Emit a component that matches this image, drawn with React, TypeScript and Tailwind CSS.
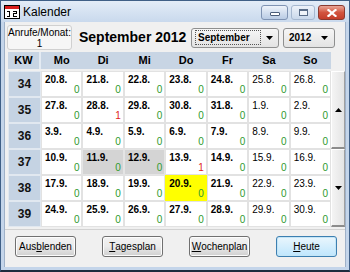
import React from "react";

type Cell = { d: string; n: number; bg?: string };

const rows: { kw: number; days: Cell[] }[] = [
  { kw: 34, days: [{ d: "20.8.", n: 0 }, { d: "21.8.", n: 0 }, { d: "22.8.", n: 0 }, { d: "23.8.", n: 0 }, { d: "24.8.", n: 0 }, { d: "25.8.", n: 0 }, { d: "26.8.", n: 0 }] },
  { kw: 35, days: [{ d: "27.8.", n: 0 }, { d: "28.8.", n: 1 }, { d: "29.8.", n: 0 }, { d: "30.8.", n: 0 }, { d: "31.8.", n: 0 }, { d: "1.9.", n: 0 }, { d: "2.9.", n: 0 }] },
  { kw: 36, days: [{ d: "3.9.", n: 0 }, { d: "4.9.", n: 0 }, { d: "5.9.", n: 0 }, { d: "6.9.", n: 0 }, { d: "7.9.", n: 0 }, { d: "8.9.", n: 0 }, { d: "9.9.", n: 0 }] },
  { kw: 37, days: [{ d: "10.9.", n: 0 }, { d: "11.9.", n: 0, bg: "grey" }, { d: "12.9.", n: 0, bg: "grey" }, { d: "13.9.", n: 1 }, { d: "14.9.", n: 0 }, { d: "15.9.", n: 0 }, { d: "16.9.", n: 0 }] },
  { kw: 38, days: [{ d: "17.9.", n: 0 }, { d: "18.9.", n: 0 }, { d: "19.9.", n: 0 }, { d: "20.9.", n: 0, bg: "yellow" }, { d: "21.9.", n: 0 }, { d: "22.9.", n: 0 }, { d: "23.9.", n: 0 }] },
  { kw: 39, days: [{ d: "24.9.", n: 0 }, { d: "25.9.", n: 0 }, { d: "26.9.", n: 0 }, { d: "27.9.", n: 0 }, { d: "28.9.", n: 0 }, { d: "29.9.", n: 0 }, { d: "30.9.", n: 0 }] },
];

const dayNames = ["Mo", "Di", "Mi", "Do", "Fr", "Sa", "So"];

const Arrow = ({ up }: { up?: boolean }) => (
  <svg width="7" height="4" viewBox="0 0 7 4">
    {up ? <polygon points="0,4 7,4 3.5,0" fill="#000" /> : <polygon points="0,0 7,0 3.5,4" fill="#000" />}
  </svg>
);

const Btn = ({ children, def }: { children: React.ReactNode; def?: boolean }) => (
  <div
    className={`w-[61px] h-[21px] rounded-[3px] border flex items-center justify-center text-[10px] text-black whitespace-nowrap ${
      def
        ? "border-[#3c7fb1] bg-gradient-to-b from-[#eaf6fd] to-[#bee6fd] shadow-[inset_0_0_0_1px_#c4e5f6]"
        : "border-[#707070] bg-gradient-to-b from-[#f2f2f2] via-[#ebebeb] to-[#cfcfcf] shadow-[inset_0_0_0_1px_#fcfcfc]"
    }`}
  >
    {children}
  </div>
);

export default function App() {
  return (
    <div className="w-[350px] h-[272px] flex flex-col bg-[#c4d5ea] border border-[#3f5f86] border-b-2 border-b-[#1e2c3e] font-['Liberation_Sans',Arial,sans-serif] overflow-hidden">
      {/* TITLE BAR */}
      <div className="h-[21px] flex items-center bg-gradient-to-b from-[#e3ecf7] to-[#c9d9ed] relative">
        <svg width="16" height="14" viewBox="0 0 16 14" className="ml-[3px]">
          <rect x="0.5" y="0.5" width="15" height="13" fill="#fff" stroke="#000" />
          <rect x="1" y="1" width="14" height="3" fill="#d81e1e" />
          <rect x="3" y="6" width="3" height="1" fill="#000" />
          <rect x="5" y="6" width="1" height="6" fill="#000" />
          <rect x="3" y="11" width="3" height="1" fill="#000" />
          <rect x="9" y="6" width="4" height="1" fill="#000" />
          <rect x="12" y="6" width="1" height="3" fill="#000" />
          <rect x="9" y="8" width="4" height="1" fill="#000" />
          <rect x="9" y="8" width="1" height="4" fill="#000" />
          <rect x="9" y="11" width="4" height="1" fill="#000" />
        </svg>
        <span className="ml-[3px] text-[12px] text-black">Kalender</span>
        <div className="ml-auto mr-[4px] flex items-start gap-[3px] self-start mt-[4px]">
          <div className="w-[27px] h-[15px] rounded-[3px] border border-[#7f93b3] bg-gradient-to-b from-[#eef3fa] to-[#b9cbe4] flex items-end justify-center pb-[3px]">
            <div className="w-[10px] h-[4px] bg-white border border-[#4a5d7a] rounded-[1px]" />
          </div>
          <div className="w-[24px] h-[15px] rounded-[3px] border border-[#a6b8d0] bg-gradient-to-b from-[#edf2f9] to-[#c9d8eb] flex items-center justify-center">
            <div className="w-[9px] h-[7px] border border-[#5a6d88] border-t-2 bg-white/60" />
          </div>
          <div className="w-[27px] h-[15px] rounded-[3px] border border-[#8a3a30] bg-gradient-to-b from-[#e9a597] via-[#d2543f] to-[#c43d2a] flex items-center justify-center">
            <svg width="10" height="8" viewBox="0 0 10 8">
              <path d="M1.5 1 L8.5 7 M8.5 1 L1.5 7" stroke="#fff" strokeWidth="2.2" strokeLinecap="square" />
            </svg>
          </div>
        </div>
      </div>

      {/* CLIENT */}
      <div className="flex-1 mx-[3px] mb-[3px] bg-[#f0f0f0] border-l border-r border-[#9fb1c8] flex flex-col">
        {/* TOP ROW */}
        <div className="flex items-center mt-[3px] h-[25px]">
          <div className="ml-[2px] w-[65px] h-[25px] rounded-[3px] border border-[#d0d0d0] bg-[#f6f6f6] flex flex-col items-center justify-center text-[10px] leading-[11px] text-black whitespace-nowrap">
            <span>Anrufe/Monat:</span>
            <span>1</span>
          </div>
          <div className="ml-[7px] w-[112px] text-[14px] font-bold text-black whitespace-nowrap">September 2012</div>
          <div className="w-[88px] h-[20px] rounded-[3px] border border-[#8e8f8f] bg-gradient-to-b from-[#f6f6f6] to-[#e3e3e3] flex items-center px-[3px]">
            <div className="w-[66px] h-[15px] border border-dotted border-[#555] flex items-center px-[2px] text-[10px] font-bold text-black">September</div>
            <div className="ml-auto mr-[2px] flex"><Arrow /></div>
          </div>
          <div className="ml-[4px] w-[52px] h-[20px] rounded-[3px] border border-[#8e8f8f] bg-gradient-to-b from-[#f6f6f6] to-[#e3e3e3] flex items-center px-[5px]">
            <span className="text-[10px] font-bold text-black">2012</span>
            <div className="ml-auto mr-[1px] flex"><Arrow /></div>
          </div>
        </div>

        {/* GRID */}
        <div className="flex mt-[2px] pl-[3px]">
          <div className="w-[325px] flex flex-col">
            <div className="flex h-[17px] text-[11px] font-bold text-black">
              <div className="w-[31px] bg-[#c8d5e4] flex items-center justify-center">KW</div>
              <div className="w-[2px] bg-[#e4ebf3]" />
              <div className="flex-1 bg-[#c8d5e4] grid grid-cols-7">
                {dayNames.map((n) => (
                  <div key={n} className="flex items-center justify-center">{n}</div>
                ))}
              </div>
            </div>
            <div className="mt-[2px] grid grid-cols-[33px_repeat(7,1fr)]">
              {rows.map((r) => (
                <React.Fragment key={r.kw}>
                  <div className="h-[26px] border border-[#e1e8f0] bg-[#c5d3e3] flex items-center justify-center text-[12px] font-bold text-[#111]">
                    {r.kw}
                  </div>
                  {r.days.map((c, i) => (
                    <div
                      key={c.d}
                      className={`h-[26px] border relative ${
                        c.bg === "yellow"
                          ? "bg-[#ffff00] border-[#ffff00]"
                          : c.bg === "grey"
                          ? "bg-[#d4d4d4] border-[#e4e4e4]"
                          : "bg-white border-[#e2e2e2]"
                      }`}
                    >
                      <span className={`absolute left-[3px] top-[2px] text-[10px] leading-[12px] text-black ${i < 5 ? "font-bold" : ""}`}>
                        {c.d}
                      </span>
                      <span className={`absolute right-[2px] bottom-[1px] text-[10px] leading-[11px] ${c.n ? "text-[#e01b1b]" : "text-[#2e9a2e]"}`}>
                        {c.n}
                      </span>
                    </div>
                  ))}
                </React.Fragment>
              ))}
            </div>
          </div>
          {/* spin scroller */}
          <div className="w-[14px] mt-[19px] flex flex-col">
            <div className="h-[78px] bg-gradient-to-r from-[#f4f4f4] to-[#e4e4e4] border-t border-l border-white border-r border-r-[#a0a0a0] border-b-2 border-b-[#8c8c8c] flex items-center justify-center">
              <Arrow up />
            </div>
            <div className="h-[78px] bg-gradient-to-r from-[#f4f4f4] to-[#e4e4e4] border-t border-l border-white border-r border-r-[#a0a0a0] border-b-2 border-b-[#8c8c8c] flex items-center justify-center">
              <Arrow />
            </div>
          </div>
        </div>

        {/* SEPARATOR */}
        <div className="mt-[2px] h-px bg-[#d2d2d2]" />

        {/* BUTTONS */}
        <div className="flex gap-[26px] pl-[10px] mt-[6px]">
          <Btn>Aus<u>b</u>lenden</Btn>
          <Btn><u>T</u>agesplan</Btn>
          <Btn><u>W</u>ochenplan</Btn>
          <Btn def><u>H</u>eute</Btn>
        </div>
      </div>
    </div>
  );
}
